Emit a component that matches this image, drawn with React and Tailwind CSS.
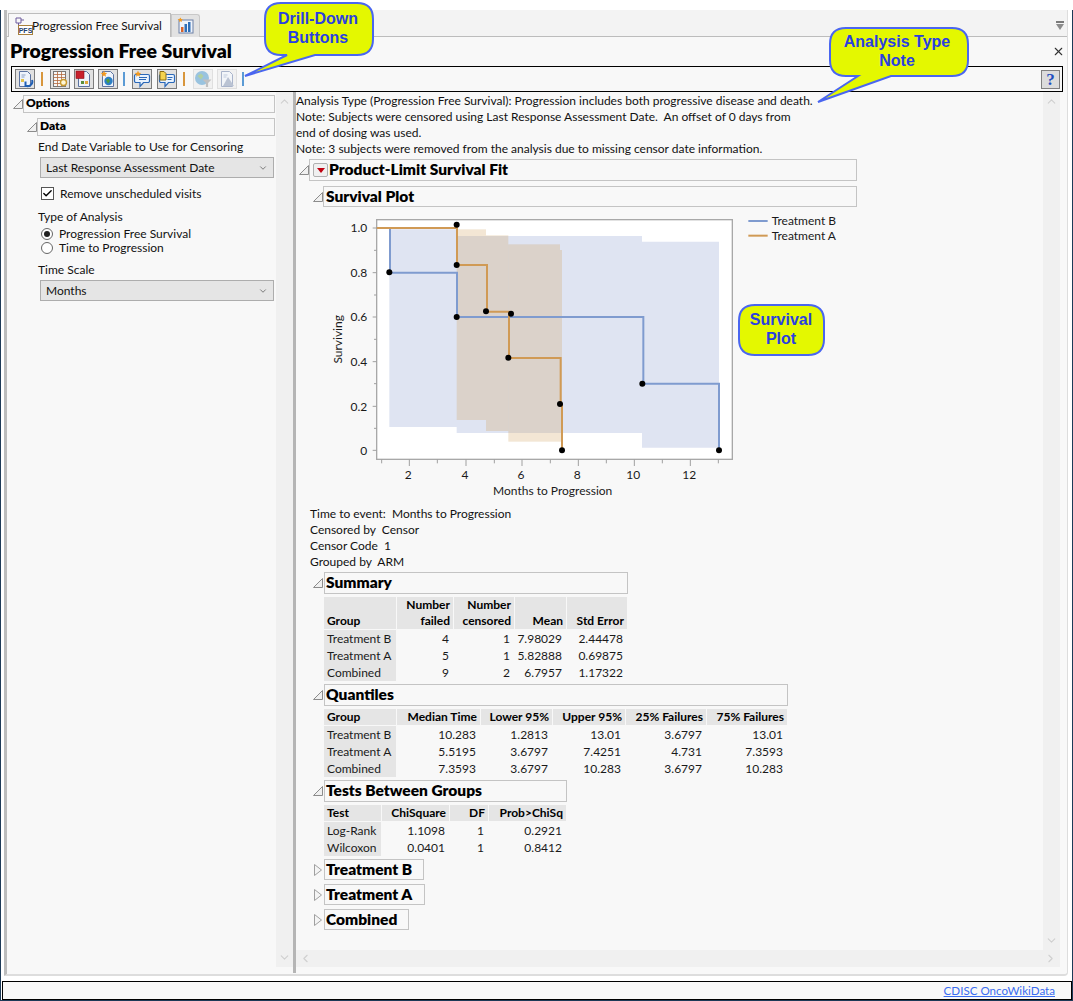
import React from 'react';
import { Check, ChevronDown, ChevronLeft, ChevronRight, ChevronUp, X } from 'lucide-react';

const Triangle = ({ open }) => (
    <svg width="10" height="12" viewBox="0 0 10 12" className="shrink-0">
        {open
            ? <path d="M0.5 10.5 L9.5 10.5 L9.5 1.5 Z" fill="#f0f0f0" stroke="#8c8c8c" />
            : <path d="M1.5 0.5 L8.5 6 L1.5 11.5 Z" fill="#f4f4f4" stroke="#a0a0a0" />}
    </svg>
);

const Heading = ({ open = true, box, children, big = true, pad = 'px-[1px]' }) => (
    <div className="flex items-center">
        <Triangle open={open} />
        <div className={`flex items-center border border-[#c4c4c4] font-extrabold text-black pb-[2px] ${big ? 'text-[15.5px]' : 'text-[12px]'} ${pad} ${box}`}>
            {children}
        </div>
    </div>
);

const Select = ({ label }) => (
    <div className="flex items-center justify-between w-[234px] h-[21px] ml-[33px] pl-[5px] pr-[5px] bg-[#e5e5e5] border border-[#adadad] text-[#111111]">
        <span>{label}</span>
        <ChevronDown size={10} strokeWidth={2} className="text-[#666666]" />
    </div>
);

const Radio = ({ on, label }) => (
    <div className="flex items-center h-[14px] ml-[34px]">
        <span className="flex items-center justify-center w-[12px] h-[12px] rounded-full border border-[#666666] bg-white">
            {on && <span className="w-[6px] h-[6px] rounded-full bg-[#222222]" />}
        </span>
        <span className="ml-[6px] text-[#111111]">{label}</span>
    </div>
);

const DataTable = ({ cols, head, rows, headClass = 'h-[16px]', width }) => (
    <div className={`ml-[28px] ${width}`}>
        <div className={`grid gap-x-px ${cols}`}>
            {head.map((h, i) => (
                <div key={i} className={`flex flex-col justify-end bg-[#e5e5e5] font-bold text-black leading-[16px] ${headClass} ${i === 0 ? 'pl-[3px] text-left' : 'pr-[3px] text-right'}`}>
                    {h.split('|').map(part => <span key={part}>{part}</span>)}
                </div>
            ))}
        </div>
        <div className={`grid gap-x-px mt-px ${cols}`}>
            {rows.flat().map((c, i) => (
                <div key={i} className={`h-[17px] leading-[17px] text-[#1a1a1a] ${i % head.length === 0 ? 'bg-[#e5e5e5] pl-[3px]' : 'text-right pr-[4px]'}`}>
                    {c}
                </div>
            ))}
        </div>
    </div>
);

const ToolButton = ({ children, off }) => (
    <div className={`flex items-center justify-center w-[20px] h-[20px] border ${off ? 'border-[#c8c8c8] bg-[#ececec] opacity-50' : 'border-[#7c7c7c] bg-[#e1e1e1]'}`}>
        <svg width="18" height="18" viewBox="0 0 18 18">{children}</svg>
    </div>
);

const Sep = ({ color }) => <div className={`w-[2px] h-[14px] ${color}`} />;

const Page = () => <path d="M3.5 1.5h8l3 3v12h-11z" fill="#eef3fb" stroke="#5c73a0" />;

const Bubble = () => <path d="M3 4.5h12a1.5 1.5 0 0 1 1.5 1.5v5a1.5 1.5 0 0 1-1.5 1.5H10.5l-3.5 4v-4H3A1.5 1.5 0 0 1 1.5 11V6A1.5 1.5 0 0 1 3 4.5z" fill="#e8f2fd" stroke="#2a68b8" strokeWidth="1.2" />;

const Star = () => <path d="M5 0.5l.9 2.2 2.3.2-1.7 1.5.5 2.3-2-1.2-2 1.2.5-2.3L1.8 2.9l2.3-.2z" fill="#f39a1e" />;

const Toolbar = () => (
    <div className="flex items-center h-[26px] mx-[4px] pl-[3px] border border-black">
        <ToolButton>
            <Page />
            <path d="M5.5 5h4M5.5 7h3" stroke="#8aa0c4" />
            <rect x="5" y="9" width="3" height="3" fill="#e2c24a" />
            <path d="M16 10a4.5 4.5 0 0 1-6.5 5.5M9.5 11.5v4.5h4.5" fill="none" stroke="#1f5fb4" strokeWidth="2" />
        </ToolButton>
        <div className="ml-[6px]"><Sep color="bg-[#d8963c]" /></div>
        <div className="ml-[7px] flex gap-[4px]">
            <ToolButton>
                <rect x="2.5" y="1.5" width="12" height="15" fill="#f7f7f7" stroke="#777777" />
                <path d="M2.5 4.5h12M2.5 7.5h12M2.5 10.5h12M2.5 13.5h12M6.5 1.5v15M10.5 1.5v15" stroke="#b4683c" strokeWidth="0.8" />
                <circle cx="12.5" cy="12.5" r="3" fill="#fff7d6" stroke="#c99a2e" strokeWidth="1.4" />
            </ToolButton>
            <ToolButton>
                <Page />
                <rect x="1" y="1" width="8" height="7.5" fill="#c8202c" stroke="#8a1018" strokeWidth="0.6" />
                <rect x="6" y="11" width="3" height="3" fill="#5a8f3c" />
                <rect x="10" y="11" width="3" height="3" fill="#e2a83a" />
            </ToolButton>
            <ToolButton>
                <Page />
                <circle cx="9.5" cy="11" r="4.2" fill="#2b7fc4" />
                <path d="M7 10l2.5-1.5 1.5 2.5-2 2.5z" fill="#4f9e3c" />
                <Star />
            </ToolButton>
        </div>
        <div className="ml-[5px]"><Sep color="bg-[#5b9bd5]" /></div>
        <div className="ml-[7px] flex gap-[5px]">
            <ToolButton>
                <Bubble />
                <path d="M6 7.5h8M6 9.5h7" stroke="#2a68b8" />
                <Star />
            </ToolButton>
            <ToolButton>
                <Bubble />
                <path d="M9.5 7.5h5M9.5 9.5h4" stroke="#2a68b8" />
                <path d="M2 1.5h4l2 2v6.5H2z" fill="#f5d34e" stroke="#8a6c10" />
            </ToolButton>
        </div>
        <div className="ml-[6px]"><Sep color="bg-[#d8963c]" /></div>
        <div className="ml-[8px] flex gap-[4px]">
            <ToolButton off>
                <circle cx="8" cy="8" r="7" fill="#3d8fc8" />
                <path d="M3.5 6l3.5-2.5 2.5 2.5-2.5 3.5z" fill="#6aa84f" />
                <path d="M8.5 9.5h9l-3.4 3.6v4h-2.2v-4z" fill="#8a8a8a" />
            </ToolButton>
            <ToolButton off>
                <Page />
                <path d="M5.5 5h4M5.5 7h3" stroke="#8aa0c4" />
                <path d="M10 7l6 9H5z" fill="#7d8fb0" />
            </ToolButton>
        </div>
        <div className="ml-[5px]"><Sep color="bg-[#5b9bd5]" /></div>
        <div className="ml-auto mr-[2px] flex items-center justify-center w-[19px] h-[19px] bg-[#dcdcdc] border border-[#808080] text-[#1f4fc0] font-['Liberation_Serif',serif] font-bold text-[17px] leading-none">?</div>
    </div>
);

const Scrollbar = ({ className }) => (
    <div className={`flex flex-col items-center justify-between py-[3px] w-[17px] bg-[#f0f0f0] text-[#cfcfcf] ${className}`}>
        <ChevronUp size={13} strokeWidth={2} />
        <ChevronDown size={13} strokeWidth={2} />
    </div>
);

const OptionsPane = () => (
    <div className="w-[269px] pt-[3px]">
        <div className="ml-[6px]">
            <Heading box="w-[252px] h-[18px]" big={false} pad="px-[2px]">Options</Heading>
        </div>
        <div className="ml-[20px] mt-[5px]">
            <Heading box="w-[238px] h-[18px]" big={false} pad="px-[2px]">Data</Heading>
        </div>
        <p className="ml-[31px] mt-[3px] h-[16px] leading-[16px] text-[#111111]">End Date Variable to Use for Censoring</p>
        <div className="mt-[2px]"><Select label="Last Response Assessment Date" /></div>
        <div className="flex items-center mt-[9px] ml-[34px] h-[13px]">
            <span className="flex items-center justify-center w-[13px] h-[13px] bg-white border border-[#555555]">
                <Check size={11} strokeWidth={3} className="text-black" />
            </span>
            <span className="ml-[6px] text-[#111111]">Remove unscheduled visits</span>
        </div>
        <p className="ml-[31px] mt-[9px] h-[16px] leading-[16px] text-[#111111]">Type of Analysis</p>
        <div className="mt-[2px]"><Radio on label="Progression Free Survival" /></div>
        <Radio label="Time to Progression" />
        <p className="ml-[31px] mt-[7px] h-[16px] leading-[16px] text-[#111111]">Time Scale</p>
        <div className="mt-[2px]"><Select label="Months" /></div>
    </div>
);

const SurvivalPlot = () => {
    const yTicks = [[54, '1.0'], [188, '0.8'], [321, '0.6'], [455, '0.4'], [589, '0.2'], [721, '0']];
    const xTicks = [[238, '2'], [408, '4'], [576, '6'], [745, '8'], [913, '10'], [1081, '12']];
    const blue = '#7f9bcf';
    const orange = '#d09a55';
    const dots = [[178, 187], [380, 44], [380, 165], [380, 321], [468, 304], [543, 311], [535, 443], [690, 582], [696, 721], [937, 521], [1167, 721]];
    return (
        <svg width="520" height="290" viewBox="0 0 1560 870" className="block ml-[34px] mt-[3px]" fontFamily="Lato, sans-serif" fontSize="36" fill="#1a1a1a">
            <rect x="140" y="29" width="1067" height="719" fill="#ffffff" stroke="#a8a8a8" strokeWidth="4" />
            <path d="M178 58H380V78H936V95H1167V713H936V669H380V651H178Z" fill="#dfe4f2" />
            <g fill="#d09a55" fillOpacity="0.25">
                <rect x="380" y="58" width="88" height="572" />
                <rect x="468" y="76" width="67" height="587" />
                <rect x="535" y="103" width="155" height="592" />
                <rect x="690" y="120" width="6" height="575" />
            </g>
            <g stroke="#a0a0a0" strokeWidth="3">
                {yTicks.map(([y]) => <path key={y} d={`M128 ${y}H140`} />)}
                {[121, 255, 388, 521, 655].map(y => <path key={y} d={`M132 ${y}H140`} />)}
                {xTicks.map(([x]) => <path key={x} d={`M${x} 748V768`} />)}
                {[155, 322, 493, 661, 829, 997, 1165].map(x => <path key={x} d={`M${x} 748V760`} />)}
            </g>
            {yTicks.map(([y, t]) => <text key={t} x="112" y={y + 13} textAnchor="end">{t}</text>)}
            {xTicks.map(([x, t]) => <text key={t} x={x - 3} y="806" textAnchor="middle">{t}</text>)}
            <text x="668" y="855" textAnchor="middle">Months to Progression</text>
            <text transform="translate(36 388) rotate(-90)" textAnchor="middle">Surviving</text>
            <path d="M140 54H180V188H381V321H940V521H1167V721" fill="none" stroke={blue} strokeWidth="6" />
            <path d="M140 54H381V165H471V305H537V444H692V582H696V721" fill="none" stroke={orange} strokeWidth="6" />
            {dots.map(([x, y]) => <circle key={`${x}-${y}`} cx={x} cy={y} r="9" fill="#000000" />)}
            <path d="M1255 33H1313" stroke={blue} strokeWidth="6" />
            <text x="1325" y="45">Treatment B</text>
            <path d="M1255 77H1313" stroke={orange} strokeWidth="6" />
            <text x="1325" y="90">Treatment A</text>
        </svg>
    );
};

const ReportPane = () => (
    <div className="flex-1 pt-[1px] leading-4 text-[#111111]">
        <p>Analysis Type (Progression Free Survival): Progression includes both progressive disease and death.</p>
        <p>Note: Subjects were censored using Last Response Assessment Date.&nbsp; An offset of 0 days from</p>
        <p>end of dosing was used.</p>
        <p>Note: 3 subjects were removed from the analysis due to missing censor date information.</p>
        <div className="ml-[3px] mt-[2px]">
            <Heading box="w-[548px] h-[22px]" pad="pl-[3px]">
                <span className="flex items-center justify-center w-[15px] h-[14px] mr-[1px] mt-[2px] bg-[#f0f0f0] border border-[#b0b0b0] rounded-[2px]">
                    <span className="w-0 h-0 border-l-[4px] border-r-[4px] border-t-[5px] border-l-transparent border-r-transparent border-t-[#c00010]" />
                </span>
                Product-Limit Survival Fit
            </Heading>
        </div>
        <div className="ml-[17px] mt-[5px]">
            <Heading box="w-[534px] h-[21px]" pad="px-[2px]">Survival Plot</Heading>
        </div>
        <SurvivalPlot />
        <div className="ml-[14px] mt-[6px]">
            <p>Time to event:&nbsp; Months to Progression</p>
            <p>Censored by&nbsp; Censor</p>
            <p>Censor Code&nbsp; 1</p>
            <p>Grouped by&nbsp; ARM</p>
        </div>
        <div className="ml-[17px] mt-[2px]">
            <Heading box="w-[304px] h-[22px] ml-px">Summary</Heading>
        </div>
        <div className="mt-[3px]">
            <DataTable
                width="w-[303px]"
                cols="grid-cols-[72px_56px_60px_51px_60px]"
                headClass="h-[32px]"
                head={['Group', 'Number|failed', 'Number|censored', 'Mean', 'Std Error']}
                rows={[
                    ['Treatment B', '4', '1', '7.98029', '2.44478'],
                    ['Treatment A', '5', '1', '5.82888', '0.69875'],
                    ['Combined', '9', '2', '6.7957', '1.17322'],
                ]}
            />
        </div>
        <div className="ml-[17px] mt-[3px]">
            <Heading box="w-[464px] h-[22px] ml-px">Quantiles</Heading>
        </div>
        <div className="mt-[3px]">
            <DataTable
                width="w-[463px]"
                cols="grid-cols-[72px_83px_71px_72px_80px_80px]"
                head={['Group', 'Median Time', 'Lower 95%', 'Upper 95%', '25% Failures', '75% Failures']}
                rows={[
                    ['Treatment B', '10.283', '1.2813', '13.01', '3.6797', '13.01'],
                    ['Treatment A', '5.5195', '3.6797', '7.4251', '4.731', '7.3593'],
                    ['Combined', '7.3593', '3.6797', '10.283', '3.6797', '10.283'],
                ]}
            />
        </div>
        <div className="ml-[17px] mt-[3px]">
            <Heading box="w-[243px] h-[22px] ml-px">Tests Between Groups</Heading>
        </div>
        <div className="mt-[3px]">
            <DataTable
                width="w-[242px]"
                cols="grid-cols-[57px_67px_38px_77px]"
                head={['Test', 'ChiSquare', 'DF', 'Prob>ChiSq']}
                rows={[
                    ['Log-Rank', '1.1098', '1', '0.2921'],
                    ['Wilcoxon', '0.0401', '1', '0.8412'],
                ]}
            />
        </div>
        <div className="ml-[17px] mt-[3px]">
            <Heading open={false} box="w-[100px] h-[21px] ml-px">Treatment B</Heading>
        </div>
        <div className="ml-[17px] mt-[4px]">
            <Heading open={false} box="w-[101px] h-[21px] ml-px">Treatment A</Heading>
        </div>
        <div className="ml-[17px] mt-[4px]">
            <Heading open={false} box="w-[85px] h-[21px] ml-px">Combined</Heading>
        </div>
    </div>
);

const Callouts = () => (
    <svg width="1073" height="1001" viewBox="0 0 1073 1001" className="absolute top-0 left-0 pointer-events-none" fontFamily="'Liberation Sans', Arial, sans-serif" fontWeight="700" fontSize="16" textAnchor="middle">
        <g fill="#e4f800" stroke="#4a66f0" strokeWidth="2">
            <path d="M281 3H357Q373 3 373 19V39Q373 55 357 55H315L245 76L287 55H281Q265 55 265 39V19Q265 3 281 3Z" />
            <path d="M846 28H952Q968 28 968 44V60Q968 76 952 76H891L818 102L858 76H846Q830 76 830 60V44Q830 28 846 28Z" />
            <path d="M755 305H808Q824 305 824 321V339Q824 355 808 355H755Q739 355 739 339V321Q739 305 755 305Z" />
        </g>
        <g fill="#2a3fe0">
            <text x="318" y="24">Drill-Down</text>
            <text x="318" y="43">Buttons</text>
            <text x="897" y="47">Analysis Type</text>
            <text x="897" y="66">Note</text>
            <text x="781" y="325">Survival</text>
            <text x="781" y="344">Plot</text>
        </g>
    </svg>
);

const App = () => (
    <div className="relative flex flex-col w-[1073px] h-[1001px] overflow-hidden bg-white font-['Lato',sans-serif] text-[12px]">
        <div className="h-[10px] shrink-0" />
        <div className="flex flex-col flex-1 pl-[3px] border-x border-[#1d3a57]">
            {/* Main window frame */}
            <div className="flex flex-col w-[1064px] h-[966px] bg-[#f8f8f8] border-l-[3px] border-l-[#bcbcbc] border-r border-r-[#dddddd] border-b-2 border-b-[#dddddd] rounded-br-[4px]">
                {/* Tabs */}
                <div className="flex justify-between h-[27px] pt-[3px] pr-[2px] bg-[#f3f3f3] border-b border-[#bcbcbc]">
                    <div className="flex pl-[1px]">
                        <div className="flex items-center w-[163px] h-[24px] pl-[6px] bg-[#f8f8f8] border border-b-0 border-[#bcbcbc]">
                            <svg width="18" height="18" viewBox="0 0 18 18">
                                <path d="M1 1h5v5h-5zM6 3h3M3.5 6v4h3" fill="none" stroke="#6c5a9c" />
                                <rect x="3.5" y="8.5" width="14" height="9" fill="#ffffff" stroke="#a8803c" />
                                <text x="10.5" y="16" textAnchor="middle" fontSize="7" fontWeight="700" fill="#24406e" fontFamily="'Liberation Sans', sans-serif">PFS</text>
                            </svg>
                            <span className="-ml-[1px] text-[11.8px] text-[#111111]">Progression Free Survival</span>
                        </div>
                        <div className="flex items-center justify-center w-[29px] h-[23px] mt-[1px] bg-[#e2e2e2] border border-b-0 border-[#c8c8c8] rounded-tr-[3px]">
                            <svg width="18" height="18" viewBox="0 0 18 18">
                                <rect x="2" y="3" width="14" height="13" fill="#eef3fb" stroke="#6c80a6" />
                                <rect x="4" y="10" width="2.5" height="5" fill="#d8632a" />
                                <rect x="7.5" y="7" width="2.5" height="8" fill="#2f6fb8" />
                                <rect x="11" y="5" width="2.5" height="10" fill="#2f6fb8" />
                                <path d="M3.5 0.5l.7 1.6 1.7.2-1.3 1.1.4 1.7-1.5-.9-1.5.9.4-1.7L.6 2.3l1.7-.2z" fill="#f39a1e" />
                            </svg>
                        </div>
                    </div>
                    <svg width="10" height="12" viewBox="0 0 10 12" className="mt-[7px]">
                        <rect x="1" y="1" width="8" height="2" fill="#7a7a7a" />
                        <path d="M1 4h8l-4 6z" fill="#8c8c8c" />
                    </svg>
                </div>
                {/* Title */}
                <div className="flex items-center justify-between h-[29px] pl-[3px] pr-[2px] pb-[2px]">
                    <h1 className="font-extrabold text-[19.5px] text-black">Progression Free Survival</h1>
                    <X size={13} strokeWidth={2} className="text-[#333333] mt-[2px]" />
                </div>
                <Toolbar />
                {/* Panes */}
                <div className="flex flex-1 min-h-0">
                    <OptionsPane />
                    <Scrollbar className="h-[875px]" />
                    <div className="w-[3px] bg-[#b5b5b5] h-[881px]" />
                    <div className="flex flex-col w-[764px] h-[875px]">
                        <div className="flex flex-1 min-h-0">
                            <ReportPane />
                            <Scrollbar className="h-[858px]" />
                        </div>
                        <div className="flex items-center justify-between h-[17px] px-[3px] bg-[#f0f0f0] text-[#cfcfcf]">
                            <ChevronLeft size={13} strokeWidth={2} />
                            <ChevronRight size={13} strokeWidth={2} />
                        </div>
                    </div>
                </div>
            </div>
            {/* Footer */}
            <div className="flex items-center justify-end w-[1070px] h-[19px] mt-[5px] -ml-[2px] pr-[16px] bg-[#f8f8f8] border border-black">
                <a href="#" className="text-[11.6px] text-[#3a6cf0] underline">CDISC OncoWikiData</a>
            </div>
        </div>
        <div className="h-px shrink-0 bg-[#1d3a57]" />
        <Callouts />
    </div>
);

export default App;
